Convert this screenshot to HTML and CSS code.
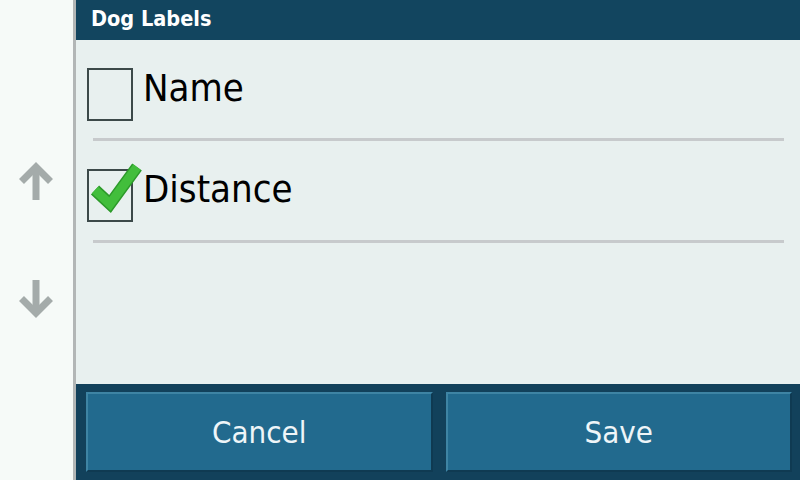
FILE: index.html
```html
<!DOCTYPE html>
<html>
<head>
<meta charset="utf-8">
<link rel="stylesheet" href="styles.css">
</head>
<body>
<div class="app">
  <aside class="side">
    <svg class="arrow" width="36" height="40" viewBox="0 0 36 40">
      <polyline points="3.5,21.5 18,7 32.5,21.5" fill="none" stroke="#a4abaa" stroke-width="7" stroke-linejoin="miter" stroke-miterlimit="4"/>
      <rect x="14.5" y="8" width="7" height="32" fill="#a4abaa"/>
    </svg>
    <svg class="arrow" width="36" height="40" viewBox="0 0 36 40">
      <polyline points="3.5,18.5 18,33 32.5,18.5" fill="none" stroke="#a4abaa" stroke-width="7" stroke-linejoin="miter" stroke-miterlimit="4"/>
      <rect x="14.5" y="0" width="7" height="32" fill="#a4abaa"/>
    </svg>
  </aside>
  <main class="main">
    <header class="title">Dog Labels</header>
    <section class="list">
      <div class="row">
        <div class="box"></div>
        <span class="label">Name</span>
      </div>
      <div class="sep"></div>
      <div class="row">
        <div class="box checked">
          <svg class="check" width="58" height="62" viewBox="0 0 58 62">
            <polyline points="8,31 23,45 50,8" fill="none" stroke="#2c9a2a" stroke-width="12" stroke-linejoin="miter"/>
            <polyline points="8,31 23,45 50,8" fill="none" stroke="#42be3c" stroke-width="9" stroke-linejoin="miter"/>
          </svg>
        </div>
        <span class="label">Distance</span>
      </div>
      <div class="sep"></div>
    </section>
    <footer class="actions">
      <button class="btn">Cancel</button>
      <button class="btn">Save</button>
    </footer>
  </main>
</div>
</body>
</html>
```
FILE: styles.css
```css
* { box-sizing: border-box; }
html, body { margin: 0; padding: 0; }
body {
  width: 800px;
  height: 480px;
  overflow: hidden;
  font-family: "DejaVu Sans Condensed", "DejaVu Sans", sans-serif;
}
.app {
  display: flex;
  width: 800px;
  height: 480px;
}
.side {
  width: 76px;
  flex: none;
  background: #f6faf8;
  border-right: 3px solid #b2b6b6;
  display: flex;
  flex-direction: column;
  align-items: center;
  padding-top: 160px;
  gap: 80px;
  padding-right: 1px;
}
.arrow { display: block; }
.main {
  flex: 1;
  display: flex;
  flex-direction: column;
  background: #e8f0ef;
}
.title {
  height: 40px;
  background: #12455f;
  color: #ffffff;
  font-weight: bold;
  font-size: 21.5px;
  line-height: 38px;
  padding-left: 15px;
}
.list {
  flex: 1;
  display: flex;
  flex-direction: column;
}
.row {
  height: 98px;
  display: flex;
  align-items: flex-start;
  padding: 28px 0 0 11px;
}
.row + .sep + .row { height: 99px; }
.box {
  position: relative;
  width: 46px;
  height: 53px;
  border: 2px solid #3c4949;
  flex: none;
}
.check {
  position: absolute;
  left: -2px;
  top: -12px;
}
.label {
  margin-left: 10px;
  font-size: 38px;
  line-height: 38px;
  margin-top: 1px;
  color: #000000;
}
.sep {
  height: 3px;
  background: #c7cacc;
  margin: 0 16px 0 17px;
}
.actions {
  height: 96px;
  background: #12415b;
  display: flex;
  gap: 13px;
  padding: 8px 8px 8px 10px;
}
.btn {
  flex: 1;
  background: #226a8e;
  border: none;
  border-top: 2px solid #3e84a4;
  border-left: 2px solid #3e84a4;
  border-right: 2px solid #0f3a52;
  border-bottom: 2px solid #0f3a52;
  color: #eef5f8;
  font-family: "DejaVu Sans Condensed", "DejaVu Sans", sans-serif;
  font-size: 31px;
  padding: 0;
}
```
